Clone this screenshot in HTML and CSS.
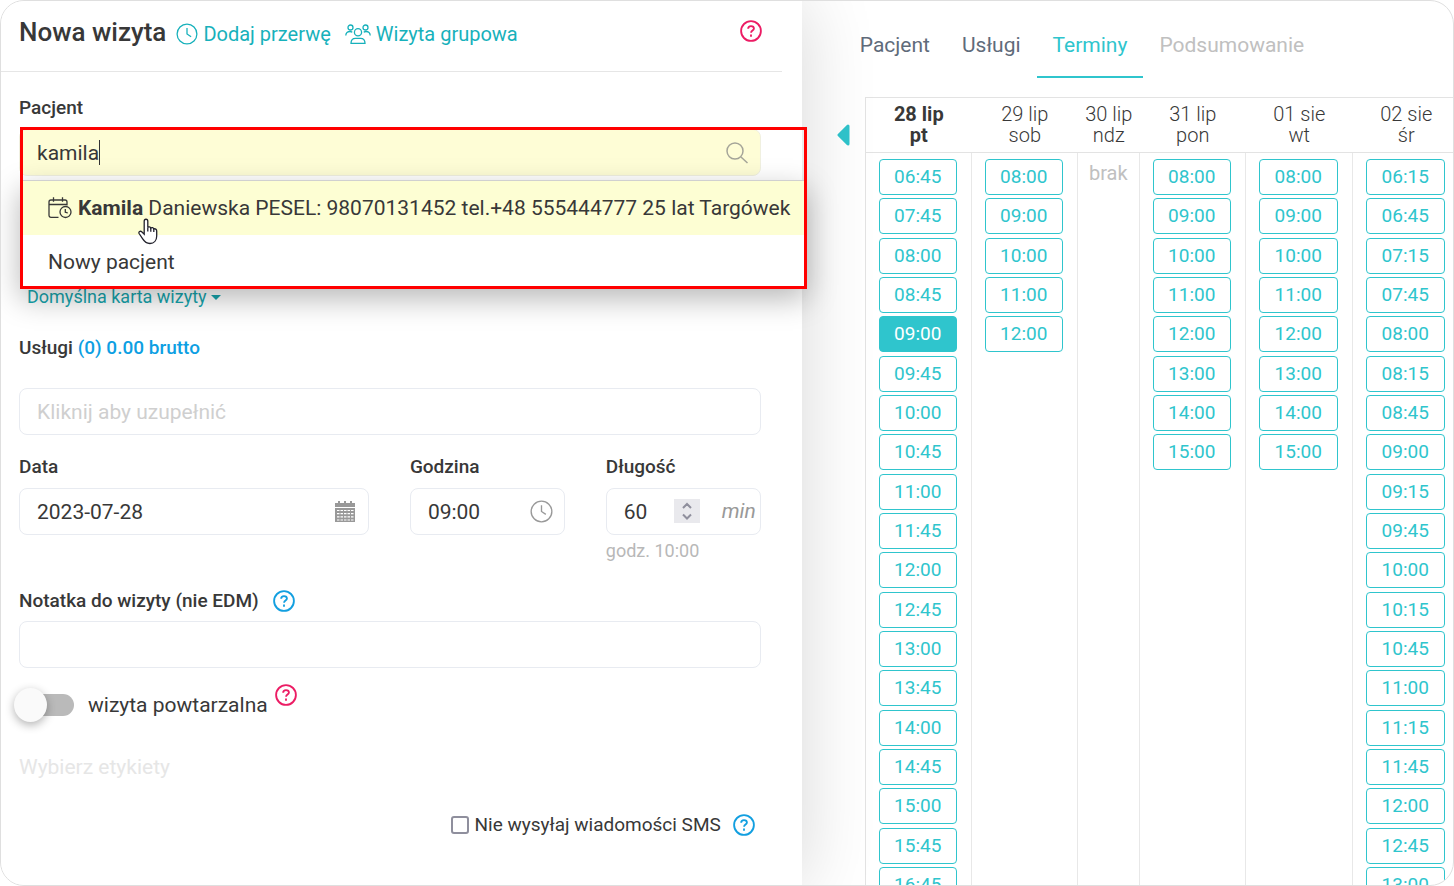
FILE: index.html
```html
<!DOCTYPE html>
<html lang="pl">
<head>
<meta charset="utf-8">
<title>Nowa wizyta</title>
<meta name="viewport" content="width=device-width, initial-scale=1">
<link rel="stylesheet" href="styles.css">
</head>
<body>
<svg class="sprite" aria-hidden="true">
  <symbol id="i-clock" viewBox="0 0 24 24"><circle cx="12" cy="12" r="10.8"/><path d="M12 5.5V12l4.5 3"/></symbol>
  <symbol id="i-help" viewBox="0 0 24 24"><circle cx="12" cy="12" r="10.8"/><path d="M8.9 9.6c0-1.9 1.3-3 3.1-3s3.2 1 3.2 2.7c0 2.2-3.1 2.2-3.1 4.5"/><path d="M12 15.7v2.5"/></symbol>
</svg>
<div class="app">
  <form class="panel">
    <header class="panel-head">
      <h1 class="title">Nowa wizyta</h1>
      <a class="head-link" href="#"><svg class="icon thin"><use href="#i-clock"/></svg>Dodaj przerwę</a>
      <a class="head-link group" href="#"><svg class="icon-group" viewBox="0 0 26 20"><circle cx="5.5" cy="3.5" r="2.5"/><circle cx="20.5" cy="3.5" r="2.5"/><circle cx="13" cy="8.2" r="3.6"/><path d="M.8 11.5c0-2.6 1.8-4 4.2-4 .9 0 1.700.3 2.300.7M25.200 11.500c0-2.600-1.800-4-4.200-4-.9 0-1.700.3-2.300.7M6 19.300c0-3.300 2-5 4.500-5h5c2.500 0 4.500 1.700 4.500 5z"/></svg>Wizyta grupowa</a>
      <button class="help pink" type="button" aria-label="Pomoc"><svg class="icon"><use href="#i-help"/></svg></button>
    </header>
    <div class="fields">
      <label class="label" for="patient">Pacjent</label>
      <div class="search">
        <input class="input search-input" id="patient" type="text" value="kamila" autocomplete="off">
        <span class="caret"></span>
        <svg class="search-icon" viewBox="0 0 22 22"><circle cx="9" cy="9" r="8"/><path d="M15 15l6.500 6"/></svg>
        <div class="suggestions">
          <button class="suggestion active" type="button"><svg class="icon-cal" viewBox="0 0 24 22"><path d="M10.500 20.300H3c-1.300 0-2-.7-2-2V5c0-1.200.7-2 2-2h14c1.200 0 2 .8 2 2v3.500M1 7.500h18M5.500.3v4.500M14.500.3v4.500"/><circle cx="17.500" cy="15" r="5.500"/><path d="M17.300 12v3.200l2.500.8"/></svg><span><b>Kamila</b> Daniewska PESEL: 98070131452 tel.+48 555444777 25 lat Targówek</span></button>
          <button class="suggestion" type="button">Nowy pacjent</button>
        </div>
        <span class="frame"></span>
        <svg class="cursor" viewBox="0 0 20 27"><path d="M6.200 3.200c0-2.600 3.600-2.600 3.600 0v6.300c.6-1.100 2.600-.9 3 .5 1-.9 2.700-.4 3 .9 1.400-.5 2.900.3 2.900 2.100v5c0 4.500-2.700 7.500-6.700 7.500-3.700 0-5.600-1.800-7.300-4.600l-3.600-5.400c-.8-1.600 1.200-3 2.600-1.700l2.500 2.400z"/><path d="M9.800 9.500v4M12.800 10v3.700M15.800 11v3"/></svg>
      </div>
      <button class="card-link" type="button">Domyślna karta wizyty<span class="drop"></span></button>
      <label class="label services-label" for="services">Usługi <span class="sum">(0) 0.00 brutto</span></label>
      <input class="input" id="services" type="text" placeholder="Kliknij aby uzupełnić">
      <div class="row">
        <div class="field">
          <label class="label" for="date">Data</label>
          <div class="control">
            <input class="input" id="date" type="text" value="2023-07-28">
            <svg class="date-icon" viewBox="0 0 20 21"><path class="solid" d="M0 2h3V0h2v2h4V0h2v2h4V0h2v2h3v4H0zM0 7h20v14H0z"/><path class="holes" d="M2 9.500h2.500M5.500 9.500H8M9 9.500h2.500M12.500 9.500H15M16 9.500h2.500M2 12.700h2.500M5.500 12.700H8M9 12.700h2.500M12.500 12.700H15M16 12.700h2.500M2 15.900h2.500M5.500 15.900H8M9 15.900h2.500M12.500 15.900H15M16 15.900h2.500M2 19h2.500M5.500 19H8M9 19h2.500M12.500 19H15M16 19h2.500"/></svg>
          </div>
        </div>
        <div class="field">
          <label class="label" for="hour">Godzina</label>
          <div class="control">
            <input class="input" id="hour" type="text" value="09:00">
            <svg class="hour-icon thin"><use href="#i-clock"/></svg>
          </div>
        </div>
        <div class="field">
          <label class="label" for="length">Długość</label>
          <div class="control">
            <input class="input number" id="length" type="number" value="60">
            <svg class="spinner" viewBox="0 0 26 24"><path d="M9 9l4-4 4 4M9 15.500l4 4 4-4"/></svg>
            <em class="unit">min</em>
          </div>
          <small class="hint">godz. 10:00</small>
        </div>
      </div>
      <div class="note-head">
        <label class="label" for="note">Notatka do wizyty (nie EDM)</label>
        <button class="help blue" type="button" aria-label="Pomoc"><svg class="icon"><use href="#i-help"/></svg></button>
      </div>
      <input class="input" id="note" type="text">
      <div class="repeat">
        <input class="toggle" id="repeat" type="checkbox">
        <label for="repeat">wizyta powtarzalna</label>
        <button class="help pink raised" type="button" aria-label="Pomoc"><svg class="icon"><use href="#i-help"/></svg></button>
      </div>
      <button class="tags" type="button">Wybierz etykiety</button>
      <div class="sms">
        <input class="check" id="sms" type="checkbox">
        <label for="sms">Nie wysyłaj wiadomości SMS</label>
        <button class="help blue" type="button" aria-label="Pomoc"><svg class="icon"><use href="#i-help"/></svg></button>
      </div>
    </div>
  </form>
  <main class="schedule">
    <nav class="tabs">
      <a class="tab" href="#">Pacjent</a>
      <a class="tab" href="#">Usługi</a>
      <a class="tab current" href="#">Terminy</a>
      <a class="tab disabled" href="#">Podsumowanie</a>
    </nav>
    <div class="calendar">
      <button class="prev" type="button" aria-label="Poprzednie dni"><svg viewBox="0 0 13 22"><path d="M11 2v18L2 11z"/></svg></button>
      <div class="days">
        <section class="day"><h2 class="day-head today">28 lip<br>pt</h2><div class="slots">
          <button type="button">06:45</button><button type="button">07:45</button><button type="button">08:00</button><button type="button">08:45</button><button type="button" class="selected">09:00</button><button type="button">09:45</button><button type="button">10:00</button><button type="button">10:45</button><button type="button">11:00</button><button type="button">11:45</button><button type="button">12:00</button><button type="button">12:45</button><button type="button">13:00</button><button type="button">13:45</button><button type="button">14:00</button><button type="button">14:45</button><button type="button">15:00</button><button type="button">15:45</button><button type="button">16:45</button>
        </div></section>
        <section class="day"><h2 class="day-head">29 lip<br>sob</h2><div class="slots">
          <button type="button">08:00</button><button type="button">09:00</button><button type="button">10:00</button><button type="button">11:00</button><button type="button">12:00</button>
        </div></section>
        <section class="day"><h2 class="day-head">30 lip<br>ndz</h2><p class="none">brak</p></section>
        <section class="day"><h2 class="day-head">31 lip<br>pon</h2><div class="slots">
          <button type="button">08:00</button><button type="button">09:00</button><button type="button">10:00</button><button type="button">11:00</button><button type="button">12:00</button><button type="button">13:00</button><button type="button">14:00</button><button type="button">15:00</button>
        </div></section>
        <section class="day"><h2 class="day-head">01 sie<br>wt</h2><div class="slots">
          <button type="button">08:00</button><button type="button">09:00</button><button type="button">10:00</button><button type="button">11:00</button><button type="button">12:00</button><button type="button">13:00</button><button type="button">14:00</button><button type="button">15:00</button>
        </div></section>
        <section class="day"><h2 class="day-head">02 sie<br>śr</h2><div class="slots">
          <button type="button">06:15</button><button type="button">06:45</button><button type="button">07:15</button><button type="button">07:45</button><button type="button">08:00</button><button type="button">08:15</button><button type="button">08:45</button><button type="button">09:00</button><button type="button">09:15</button><button type="button">09:45</button><button type="button">10:00</button><button type="button">10:15</button><button type="button">10:45</button><button type="button">11:00</button><button type="button">11:15</button><button type="button">11:45</button><button type="button">12:00</button><button type="button">12:45</button><button type="button">13:00</button>
        </div></section>
      </div>
    </div>
  </main>
</div>
</body>
</html>
```
FILE: styles.css
```css
* { box-sizing: border-box; }
body {
  margin: 0;
  background: #fff;
  color: #383838;
  font: 400 21px/24px Roboto, "Liberation Sans", sans-serif;
}
button, input { font: inherit; color: inherit; }
button { padding: 0; border: 0; background: none; cursor: pointer; }
a { text-decoration: none; }
svg { fill: none; stroke: currentColor; stroke-width: 2; flex: none; }
.sprite { display: none; }
.thin { stroke-width: 1.4; }
.icon { display: block; width: 22px; height: 22px; }

.app {
  display: grid;
  grid-template-columns: 55.15% 1fr;
  height: 100vh;
  border: 1px solid #dfdfdf;
  border-radius: 24px;
  overflow: hidden;
}

/* Visit form */
.panel {
  position: relative;
  z-index: 1;
  background: #fff;
  box-shadow: 0 0 70px rgba(0, 0, 0, .16);
}
.panel-head {
  display: flex;
  align-items: center;
  height: 71px;
  margin-right: 20px;
  padding: 0 20px 8px 18px;
  border-bottom: 1px solid #e6e6e6;
}
.title { margin: 0 10px 0 0; font-size: 26px; font-weight: 500; line-height: 32px; }
.head-link { display: flex; align-items: center; gap: 5px; padding-top: 4px; color: #17b1bb; font-size: 20px; }
.group { margin-left: 14px; }
.icon-group { width: 26px; height: 20px; stroke-width: 1.3; }
.help { display: flex; }
.panel-head .help { margin: 0 0 2px auto; }
.pink { color: #ec1c64; }
.blue { color: #129fe0; }

.fields { padding: 24px 41px 0 18px; }
.label { display: block; font-size: 19px; font-weight: 500; }
.input {
  display: block;
  width: 100%;
  height: 47px;
  padding: 0 17px;
  border: 1px solid #e8ebf1;
  border-radius: 8px;
  background: #fff;
  outline: 0;
}
.input::placeholder { color: #cfcfcf; opacity: 1; }
.search { position: relative; margin-top: 9px; }
.search-input { background: #fefdd6; border-color: #f0f0e0; }
.caret { position: absolute; left: 80px; top: 11px; width: 1px; height: 25px; background: #333; }
.search-icon { position: absolute; right: 13px; top: 13px; width: 22px; height: 22px; color: #a5a599; stroke-width: 1.5; }
.suggestions {
  position: absolute;
  left: 1px;
  right: -46px;
  top: 51px;
  height: 109px;
  border-top: 1px solid #d0d0d0;
  background: #fff;
  box-shadow: 0 10px 28px rgba(0, 0, 0, .28);
}
.suggestion { display: flex; align-items: center; gap: 6px; width: 100%; height: 54px; padding: 0 28px; text-align: left; white-space: nowrap; }
.suggestion b { font-weight: 700; }
.active { background: #fdfed3; }
.icon-cal { width: 24px; height: 22px; stroke-width: 1.3; }
.frame { position: absolute; inset: -2px -46px -113px 1px; border: 3px solid #f00; pointer-events: none; }
.cursor { position: absolute; left: 119px; top: 89px; width: 20px; height: 27px; fill: #fff; stroke: #22222c; stroke-width: 1.3; }
.card-link { display: flex; align-items: center; gap: 4px; margin: 109px 0 0 8px; font-size: 18px; color: #17a5ad; }
.drop { border: 5px solid transparent; border-top-color: currentColor; border-bottom: 0; }
.services-label { margin: 27px 0 28px; }
.sum { color: #0d9fe3; }
.row { display: grid; grid-template-columns: 350fr 155fr 155fr; gap: 41px; margin-top: 20px; }
.field .label { margin-bottom: 9px; }
.control { position: relative; }
.date-icon { position: absolute; right: 14px; top: 13px; width: 20px; height: 21px; }
.solid { fill: #999; stroke: none; }
.holes { stroke: #fff; stroke-width: 1.2; }
.hour-icon { position: absolute; right: 12px; top: 12px; width: 23px; height: 23px; color: #999; }
.number { appearance: textfield; }
.number::-webkit-inner-spin-button { appearance: none; }
.spinner { position: absolute; left: 68px; top: 11px; width: 26px; height: 24px; background: #e9e9ed; color: #8f8f9d; }
.unit { position: absolute; right: 5px; top: 11px; color: #999; }
.hint { display: block; margin-top: 4px; font-size: 18px; color: #b8b8b8; }
.note-head { display: flex; align-items: center; gap: 14px; margin: 26px 0 8px; }
.repeat { display: flex; align-items: center; margin-top: 25px; }
.toggle {
  position: relative;
  width: 44px;
  height: 22px;
  margin: 0 14px 0 11px;
  border-radius: 11px;
  background: #bababa;
  appearance: none;
}
.toggle::before {
  content: "";
  position: absolute;
  left: -16px;
  top: -6px;
  width: 33px;
  height: 34px;
  border-radius: 50%;
  background: #fafafa;
  box-shadow: 0 3px 10px rgba(0, 0, 0, .3);
}
.raised { align-self: flex-start; margin: -9px 0 0 7px; }
.tags { display: block; margin-top: 38px; color: #e6e6e6; }
.sms { display: flex; align-items: center; justify-content: flex-end; margin: 34px 6px 0 0; font-size: 19px; }
.check { width: 18px; height: 18px; margin: 0 5px 0 0; border: 2px solid #8f8f9d; border-radius: 3px; background: #fff; appearance: none; }
.sms .help { margin-left: 12px; }

/* Schedule */
.schedule { min-width: 0; overflow: hidden; padding-top: 20px; }
.tabs { display: flex; margin-left: 42px; }
.tab { height: 57px; padding: 12px 16px 0; color: #5f6b7a; }
.current { color: #2fc5cd; border-bottom: 2px solid #2fc5cd; }
.disabled { color: #c0c0c0; }
.calendar { display: flex; margin-top: 19px; }
.prev { width: 13px; height: 22px; margin: 27px 15px 0 35px; color: #2fc5cd; }
.prev svg { display: block; width: 13px; height: 22px; fill: currentColor; stroke-width: 3; stroke-linejoin: round; }
.days {
  flex: none;
  display: grid;
  grid-template-columns: 106px 106px 62px 106px 107px 107px;
  border: 1px solid #e3e3e3;
  border-width: 1px 0 0 1px;
}
.day { display: flex; flex-direction: column; }
.day-head { margin: 0; padding: 6px 0; font-size: 20px; font-weight: 300; line-height: 21px; text-align: center; border-bottom: 1px solid #e3e3e3; }
.today { font-weight: 700; }
.slots, .none { flex: 1; border-right: 1px solid #e8e8e8; }
.none { margin: 0; padding-top: 8px; text-align: center; color: #c0c0c0; font-size: 20px; }
.slots { display: flex; flex-direction: column; gap: 3px; padding: 6px 14px 0 13px; font-size: 19px; }
.slots button { flex: none; height: 36px; border: 1px solid #2fc5cd; border-radius: 4px; color: #2fc5cd; }
.slots button:nth-child(3n + 2) { margin-bottom: 1px; }
.slots .selected { background: #2fc5cd; color: #fff; }
```
